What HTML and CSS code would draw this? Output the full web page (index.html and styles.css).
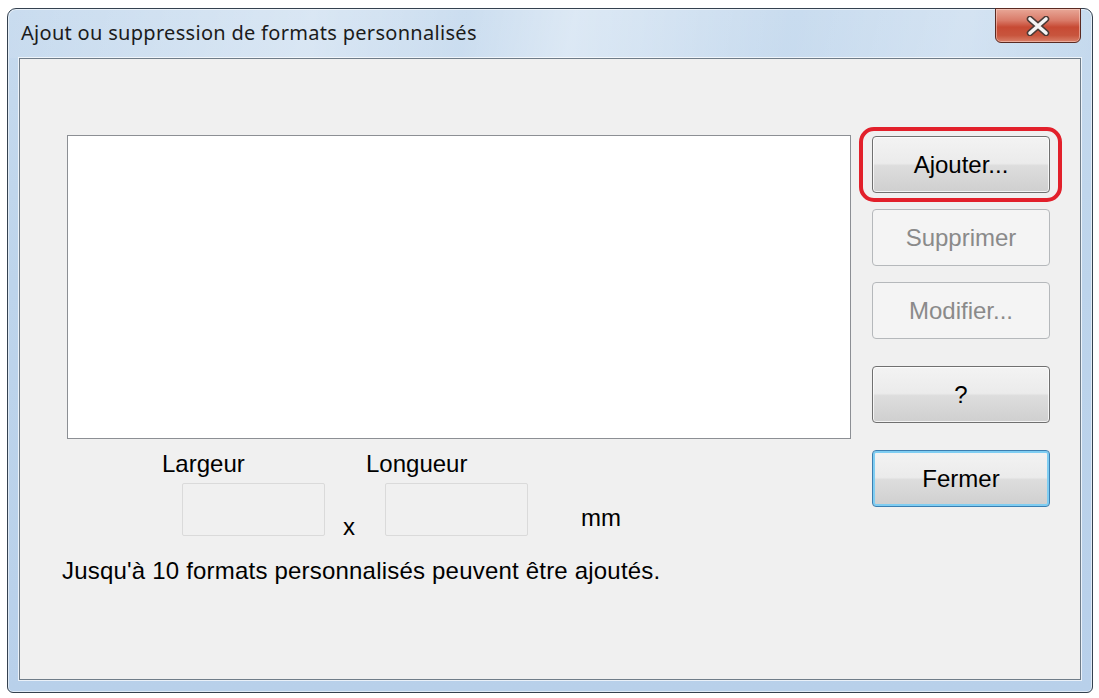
FILE: index.html
```html
<!DOCTYPE html>
<html lang="fr">
<head>
    <meta charset="UTF-8">
    <meta name="viewport" content="width=device-width, initial-scale=1.0">
    <title>Ajout ou suppression de formats personnalisés</title>
    <link rel="stylesheet" href="styles.css">
</head>
<body>

    <!-- Dialog window -->
    <div class="window">
        <div class="titlebar">
            <span class="title">Ajout ou suppression de formats personnalisés</span>
            <button class="close-btn" type="button" aria-label="Fermer">
                <svg width="24" height="20" viewBox="0 0 24 20">
                    <path d="M4 3 L20 17 M20 3 L4 17" stroke="#4a3a36" stroke-width="6.5" stroke-linecap="round" fill="none"/>
                    <path d="M4 3 L20 17 M20 3 L4 17" stroke="#f4f4f4" stroke-width="3.6" stroke-linecap="round" fill="none"/>
                </svg>
            </button>
        </div>

        <div class="client">
            <!-- List of formats and the size fields -->
            <div class="main-col">
                <div class="listbox"></div>

                <div class="size-labels">
                    <span class="label-width">Largeur</span>
                    <span>Longueur</span>
                </div>

                <div class="size-fields">
                    <input class="size-input" type="text" disabled>
                    <span class="times">x</span>
                    <input class="size-input" type="text" disabled>
                    <span class="unit">mm</span>
                </div>

                <p class="note">Jusqu'à 10 formats personnalisés peuvent être ajoutés.</p>
            </div>

            <!-- Action buttons -->
            <div class="btn-col">
                <div class="highlight">
                    <button class="btn" type="button">Ajouter...</button>
                </div>
                <button class="btn btn-gap" type="button" disabled>Supprimer</button>
                <button class="btn btn-gap" type="button" disabled>Modifier...</button>
                <button class="btn btn-gap-lg" type="button">?</button>
                <button class="btn btn-default btn-gap-lg" type="button">Fermer</button>
            </div>
        </div>
    </div>

</body>
</html>
```

FILE: styles.css
```css
body {
    margin: 0;
    padding: 8px 0 0 7px;
    background-color: #fff;
    font-family: 'Liberation Sans', Arial, sans-serif;
    color: #000;
}

.window {
    box-sizing: border-box;
    width: 1086px;
    height: 685px;
    border: 1px solid #34414f;
    border-radius: 9px 9px 6px 6px;
    background: linear-gradient(to bottom, #c6daee 0%, #bdd4eb 40%, #b8d0ea 100%);
    box-shadow: inset 0 0 0 1px rgba(255, 255, 255, 0.55);
    display: flex;
    flex-direction: column;
}

.titlebar {
    height: 49px;
    display: flex;
    justify-content: space-between;
    align-items: flex-start;
    padding: 0 11px 0 13px;
    border-radius: 8px 8px 0 0;
    background: linear-gradient(100deg, rgba(255,255,255,0.05) 0%, rgba(255,255,255,0.35) 28%, rgba(255,255,255,0.1) 42%, rgba(255,255,255,0.4) 52%, rgba(255,255,255,0.05) 72%, rgba(255,255,255,0.25) 88%, rgba(255,255,255,0) 100%);
}

.title {
    font-family: 'Noto Sans', 'Open Sans', sans-serif;
    font-size: 20px;
    letter-spacing: 0.3px;
    line-height: 24px;
    margin-top: 12px;
    color: #1b1b1b;
}

.close-btn {
    box-sizing: border-box;
    width: 86px;
    height: 35px;
    margin-top: -1px;
    padding: 0;
    border: 1px solid #5a2a22;
    border-radius: 0 0 6px 6px;
    background: linear-gradient(to bottom, #e8a797 0%, #d97a68 35%, #c74a34 55%, #c8553d 80%, #d9806a 100%);
    box-shadow: inset 0 0 0 1px rgba(255, 220, 210, 0.5);
    display: flex;
    align-items: center;
    justify-content: center;
}

.close-btn svg {
    display: block;
}

.client {
    box-sizing: border-box;
    height: 622px;
    margin: 0 11px 12px 11px;
    border: 1px solid #6f7c88;
    box-shadow: 0 0 0 1px rgba(255, 255, 255, 0.7);
    background-color: #f0f0f0;
    padding: 76px 0 0 47px;
    display: flex;
    gap: 21px;
}

.main-col {
    width: 784px;
    display: flex;
    flex-direction: column;
}

.listbox {
    box-sizing: border-box;
    height: 304px;
    background-color: #fff;
    border: 1px solid #8c8f94;
}

.size-labels {
    display: flex;
    margin-top: 11px;
    padding-left: 95px;
    font-size: 24px;
    line-height: 28px;
}

.label-width {
    width: 204px;
}

.size-fields {
    display: flex;
    align-items: flex-start;
    margin-top: 5px;
    padding-left: 115px;
    font-size: 24px;
    line-height: 28px;
}

.size-input {
    box-sizing: border-box;
    width: 143px;
    height: 53px;
    margin: 0;
    padding: 0;
    border: 1px solid #dadada;
    border-radius: 2px;
    background-color: #f0f0f0;
}

.times {
    margin: 30px 30px 0 18px;
}

.unit {
    margin: 21px 0 0 53px;
}

.note {
    margin: 16px 0 0 -5px;
    font-size: 24px;
    letter-spacing: 0.2px;
    line-height: 28px;
}

.btn-col {
    width: 178px;
    display: flex;
    flex-direction: column;
    padding-top: 1px;
}

.btn {
    box-sizing: border-box;
    width: 178px;
    height: 57px;
    padding: 0;
    border: 1px solid #707070;
    border-radius: 4px;
    background: linear-gradient(to bottom, #f3f3f3 0%, #ebebeb 48%, #dddddd 52%, #cfcfcf 100%);
    box-shadow: inset 0 0 0 1px rgba(255, 255, 255, 0.75);
    font-family: 'Liberation Sans', Arial, sans-serif;
    font-size: 24px;
    color: #000;
}

.btn:disabled {
    border-color: #b5b8bb;
    background: #f4f4f4;
    box-shadow: none;
    color: #8a8a8a;
}

.btn-gap {
    margin-top: 16px;
}

.btn-gap-lg {
    margin-top: 27px;
}

.btn-default {
    border-color: #3c7fb1;
    box-shadow: inset 0 0 0 2px #7fcdf2;
}

.highlight {
    position: relative;
}

.highlight::after {
    content: "";
    position: absolute;
    left: -13px;
    right: -12px;
    top: -9px;
    bottom: -9px;
    border: 4px solid #e2202b;
    border-radius: 15px;
}
```
